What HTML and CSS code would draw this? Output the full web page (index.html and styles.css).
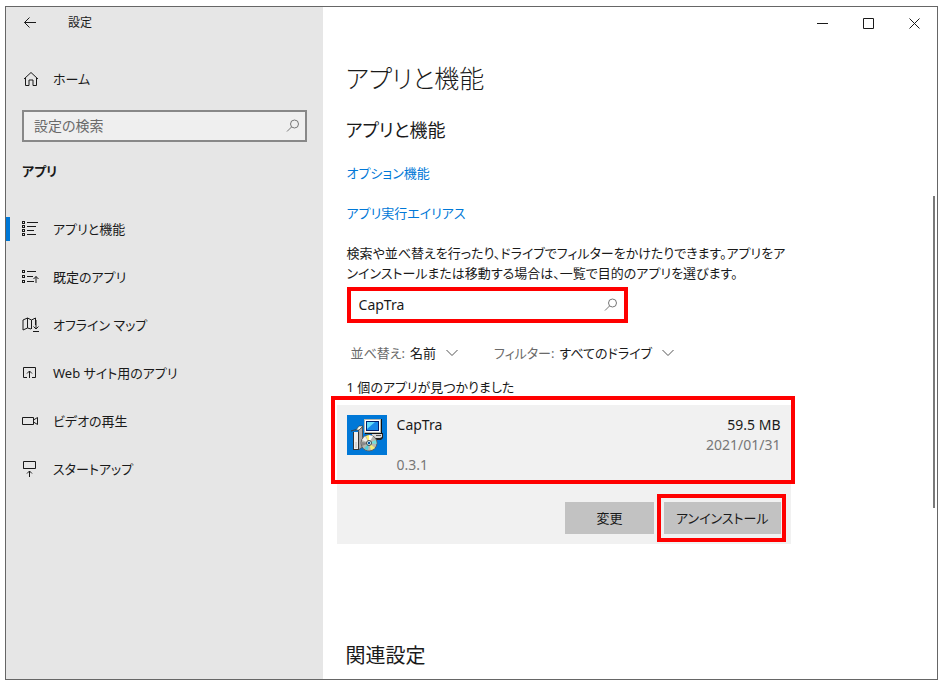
FILE: index.html
```html
<!DOCTYPE html>
<html lang="ja">
<head>
    <meta charset="UTF-8">
    <meta name="viewport" content="width=device-width, initial-scale=1.0">
    <title>設定</title>
    <link rel="stylesheet" href="styles.css">
</head>
<body>
    <div class="window">
        <aside class="sidebar">
            <div class="title-bar">
                <button class="back-btn" aria-label="戻る">
                    <svg width="14" height="12" viewBox="0 0 14 12"><path d="M13 5.500H1.500M6.500.5L1.500 5.500l5 5"/></svg>
                </button>
                <span class="window-title">設定</span>
            </div>
            <a href="#" class="nav-link home-link">
                <svg width="16" height="16" viewBox="0 0 16 16"><path d="M1 8L8 1.500 15 8M2.500 7v7.500h3.500V9h4v5.500h3.500V7"/></svg>
                ホーム
            </a>
            <div class="search-box">
                <input type="text" placeholder="設定の検索" aria-label="設定の検索">
                <svg width="14" height="14" viewBox="0 0 14 14"><circle cx="8.500" cy="5" r="4"/><path d="M5.500 8L1 12.500"/></svg>
            </div>
            <h2 class="nav-heading">アプリ</h2>
            <nav>
                <ul class="nav-list">
                    <li class="active"><a href="#" class="nav-link">
                        <svg width="17" height="16" viewBox="0 0 17 16"><path d="M5 1.500h11M5 5.500h9M5 9.500h7M5 13.500h9"/><path class="dots" d="M0 0h3v3H0zM0 4h3v3H0zM0 8h3v3H0zM0 12h3v3H0z"/><path class="holes" d="M1 1h1v1H1zM1 5h1v1H1zM1 9h1v1H1zM1 13h1v1H1z"/></svg>
                        アプリと機能</a></li>
                    <li><a href="#" class="nav-link">
                        <svg width="17" height="16" viewBox="0 0 17 16"><path d="M5 2.500h9M5 7.500h6M5 12.500h7M14 14V7.500M11.500 10L14 7.500 16.500 10"/><path class="dots" d="M0 1h3v3H0zM0 6h3v3H0zM0 11h3v3H0z"/><path class="holes" d="M1 2h1v1H1zM1 7h1v1H1zM1 12h1v1H1z"/></svg>
                        既定のアプリ</a></li>
                    <li><a href="#" class="nav-link">
                        <svg width="17" height="16" viewBox="0 0 17 16"><path d="M9 12L5.500 11 1 13V3l4.500-2L9.500 3 13.500 1v7M5.500 1v10M9.500 3v9M14 3v9M11.500 9.500L14 12l2.500-2.500M11 14.500h6"/></svg>
                        オフライン マップ</a></li>
                    <li><a href="#" class="nav-link">
                        <svg width="17" height="16" viewBox="0 0 17 16"><path d="M5 12.500H1.500v-10h12v10H10M7.500 13V6M5 8.500L7.500 6 10 8.500"/></svg>
                        Web サイト用のアプリ</a></li>
                    <li><a href="#" class="nav-link">
                        <svg width="17" height="16" viewBox="0 0 17 16"><path d="M.5 4.500h11v7H.5zM11.500 7L15.500 4.500v7L11.500 9"/></svg>
                        ビデオの再生</a></li>
                    <li><a href="#" class="nav-link">
                        <svg width="17" height="16" viewBox="0 0 17 16"><path d="M5 7.500H1.500v-7h12v7H1.500M7.500 16v-6M5 12.500L7.500 10 10 12.500"/></svg>
                        スタートアップ</a></li>
                </ul>
            </nav>
        </aside>

        <main class="main">
            <div class="window-controls">
                <button aria-label="最小化"><svg width="11" height="11" viewBox="0 0 11 11"><path d="M0 5.500h11"/></svg></button>
                <button aria-label="最大化"><svg width="11" height="11" viewBox="0 0 11 11"><path d="M.5.5h10v10H.5z"/></svg></button>
                <button aria-label="閉じる"><svg width="11" height="11" viewBox="0 0 11 11"><path d="M.5.5l10 10M10.500.5l-10 10"/></svg></button>
            </div>
            <div class="content">
                <h1>アプリと機能</h1>
                <h2>アプリと機能</h2>
                <a href="#" class="text-link">オプション機能</a>
                <a href="#" class="text-link">アプリ実行エイリアス</a>
                <p class="description">検索や並べ替えを行ったり、ドライブでフィルターをかけたりできます。アプリをア<br>ンインストールまたは移動する場合は、一覧で目的のアプリを選びます。</p>
                <div class="search-box app-search">
                    <input type="text" value="CapTra" aria-label="アプリの検索">
                    <svg width="14" height="14" viewBox="0 0 14 14"><circle cx="8.500" cy="5" r="4"/><path d="M5.500 8L1 12.500"/></svg>
                </div>
                <div class="filters">
                    <div class="filter">
                        <label for="sort">並べ替え:</label>
                        <select id="sort"><option>名前</option></select>
                        <svg width="12" height="8" viewBox="0 0 12 8"><path d="M.5 1L6 6.500 11.500 1"/></svg>
                    </div>
                    <div class="filter">
                        <label for="drive">フィルター:</label>
                        <select id="drive"><option>すべてのドライブ</option></select>
                        <svg width="12" height="8" viewBox="0 0 12 8"><path d="M.5 1L6 6.500 11.500 1"/></svg>
                    </div>
                </div>
                <p class="count">1 個のアプリが見つかりました</p>

                <div class="app-card">
                    <div class="app-info">
                        <svg class="app-icon" width="40" height="40" viewBox="0 0 40 40">
                            <rect width="40" height="40" fill="#0078d7"/>
                            <!-- monitor -->
                            <path d="M26 18h10v5l-2 2h-8z" fill="#222"/>
                            <path d="M25 18h10v4l-2 1h-8z" fill="#d8d8d8"/>
                            <path d="M29 20h5v1h-5z" fill="#555"/>
                            <path d="M18 4h17v15H18z" fill="#111"/>
                            <path d="M17 4h17v14H17z" fill="#b8b8b0"/>
                            <path d="M18 5h15v12H18z" fill="#fff"/>
                            <path d="M19 6h13v10H19z" fill="#00206c"/>
                            <path d="M20 7h11v8H20z" fill="#1687e8"/>
                            <path d="M20 7h8l-8 7z" fill="#63dcfa"/>
                            <!-- box -->
                            <path d="M11 15l5-4v21l-4 3z" fill="#555"/>
                            <path d="M12 15l3-2v19l-3 2z" fill="#aaa"/>
                            <path d="M4 16l3-1h5l4-4h-4l-3 4z" fill="#f8f8e8" stroke="#333" stroke-width=".6"/>
                            <path d="M6 17h6v18H6z" fill="#333"/>
                            <path d="M7 17h4v17H7z" fill="#eee"/>
                            <path d="M8 28h2M8 30h2M8 32h2" stroke="#bbb"/>
                            <!-- disc -->
                            <circle cx="22" cy="28" r="8" fill="#b8b8b0" stroke="#555" stroke-width=".8"/>
                            <path d="M22 28l-7-3 3-4z" fill="#eee"/>
                            <path d="M22 28l-3-7 3-1z" fill="#fff36a"/>
                            <path d="M22 28V20l4 1z" fill="#fff"/>
                            <path d="M22 28l7-3 .5 4z" fill="#72e0dc"/>
                            <path d="M22 28l6 5-4 2z" fill="#f4ef74"/>
                            <path d="M22 28l-1 7.500-4-2z" fill="#58ccd8"/>
                            <path d="M22 28l-7 3v-4z" fill="#888"/>
                            <circle cx="22" cy="28" r="2.500" fill="#dff" stroke="#222" stroke-width=".8"/>
                            <circle cx="22" cy="28" r="1.200" fill="#0050a0"/>
                        </svg>
                        <div class="app-name">
                            <div>CapTra</div>
                            <div class="version">0.3.1</div>
                        </div>
                        <div class="app-size">
                            <div>59.5 MB</div>
                            <div class="date">2021/01/31</div>
                        </div>
                    </div>
                    <div class="app-actions">
                        <button class="btn">変更</button>
                        <div class="uninstall"><button class="btn">アンインストール</button></div>
                    </div>
                </div>

                <h2 class="related">関連設定</h2>
            </div>
            <div class="scrollbar"></div>
        </main>
    </div>
</body>
</html>
```
FILE: styles.css
```css
* {
    box-sizing: border-box;
}

body {
    margin: 0;
    padding: 6px 5px 7px;
    background-color: #fff;
    color: #1a1a1a;
    font-family: "Noto Sans", "Noto Sans CJK JP", sans-serif;
    font-size: 13px;
    line-height: 20px;
    font-feature-settings: "palt";
}

h1, h2, p, ul {
    margin: 0;
    padding: 0;
    font-weight: normal;
}

button, input, select {
    font: inherit;
    font-feature-settings: inherit;
    color: inherit;
    border: none;
    padding: 0;
    background: none;
}

svg {
    fill: none;
    stroke: #1a1a1a;
    flex-shrink: 0;
}

.window {
    display: flex;
    min-height: calc(100vh - 13px);
    border: 1px solid #666;
}

/* Sidebar */
.sidebar {
    width: 34%;
    background-color: #e6e6e6;
}

.title-bar {
    display: flex;
    align-items: center;
    gap: 31px;
    height: 32px;
    padding-left: 17px;
}

.back-btn {
    display: flex;
}

.window-title {
    font-size: 12px;
}

.nav-link {
    display: flex;
    align-items: center;
    gap: 14px;
    height: 48px;
    padding-left: 16px;
    color: inherit;
    text-decoration: none;
}

.home-link {
    margin-top: 16px;
    padding-left: 17px;
}

.search-box {
    display: flex;
    align-items: center;
    height: 32px;
    margin: 7px 16px 0;
    padding: 0 5px 0 10px;
    background-color: #efefef;
    border: 2px solid #888;
    font-size: 14px;
}

.search-box input {
    flex: 1;
    min-width: 0;
    outline: none;
}

.search-box input::placeholder {
    color: #6a6a6a;
    opacity: 1;
}

.search-box svg {
    stroke: #777;
}

.nav-heading {
    margin: 15px 16px 20px;
    font-size: 13px;
    font-weight: bold;
}

.nav-list {
    list-style-type: none;
}

.nav-list li {
    position: relative;
}

.nav-list .active::before {
    content: "";
    position: absolute;
    left: 0;
    top: 12px;
    width: 4px;
    height: 24px;
    background-color: #0078d7;
}

.dots {
    fill: #1a1a1a;
    stroke: none;
}

.holes {
    fill: #e6e6e6;
    stroke: none;
}

/* Main area */
.main {
    position: relative;
    flex: 1;
    min-width: 0;
}

.window-controls {
    display: flex;
    justify-content: flex-end;
}

.window-controls button {
    display: flex;
    align-items: center;
    justify-content: center;
    width: 46px;
    height: 32px;
}

.content {
    max-width: 480px;
    padding: 19px 12px 0 24px;
}

h1 {
    margin-left: -1px;
    font-size: 25px;
    font-weight: 300;
    line-height: 40px;
}

h2 {
    margin: 18px 0 19px -1px;
    font-size: 18px;
    line-height: 28px;
}

.nav-heading {
    line-height: 28px;
}

.text-link {
    display: block;
    width: fit-content;
    margin-bottom: 20px;
    color: #0078d7;
    text-decoration: none;
}

.description {
    white-space: nowrap;
}

.app-search {
    width: 281px;
    height: 36px;
    margin: 4px 0 20px;
    padding: 0 6px 0 8px;
    background-color: #fff;
    border: 4px solid #f00;
}

.filters {
    display: flex;
    gap: 36px;
    margin: 0 4px;
}

.filter {
    display: flex;
    align-items: center;
    gap: 5px;
}

.filter label {
    color: #6a6a6a;
}

.filter select {
    appearance: none;
}

.filter svg {
    margin-left: 4px;
    stroke: #555;
}

.count {
    margin: 14px 0 8px;
}

.app-card {
    margin: 0 0 0 -10px;
    background-color: #f1f1f1;
}

.app-info {
    position: relative;
    display: flex;
    gap: 10px;
    height: 79px;
    padding: 10px;
    font-size: 14px;
}

/* red frames */
.app-info::after,
.uninstall::after {
    content: "";
    position: absolute;
    border: 4px solid #f00;
    pointer-events: none;
}

.app-info::after {
    inset: -9px -4px 0 -6px;
}

.uninstall::after {
    inset: -8px -5px -8px -7px;
}

.app-icon {
    stroke: none;
}

.version {
    margin-top: 20px;
    color: #777;
}

.app-size {
    margin-left: auto;
    text-align: right;
}

.date {
    color: #777;
}

.app-actions {
    display: flex;
    justify-content: flex-end;
    gap: 10px;
    padding: 18px 10px 10px;
}

.uninstall {
    position: relative;
}

.btn {
    min-width: 89px;
    height: 32px;
    padding: 0 12px;
    background-color: #c2c2c2;
}

.related {
    margin-top: 98px;
    margin-bottom: 0;
    font-size: 20px;
}

.scrollbar {
    position: absolute;
    top: 189px;
    right: 2px;
    width: 2px;
    height: 312px;
    background-color: #7a7a7a;
}
```
